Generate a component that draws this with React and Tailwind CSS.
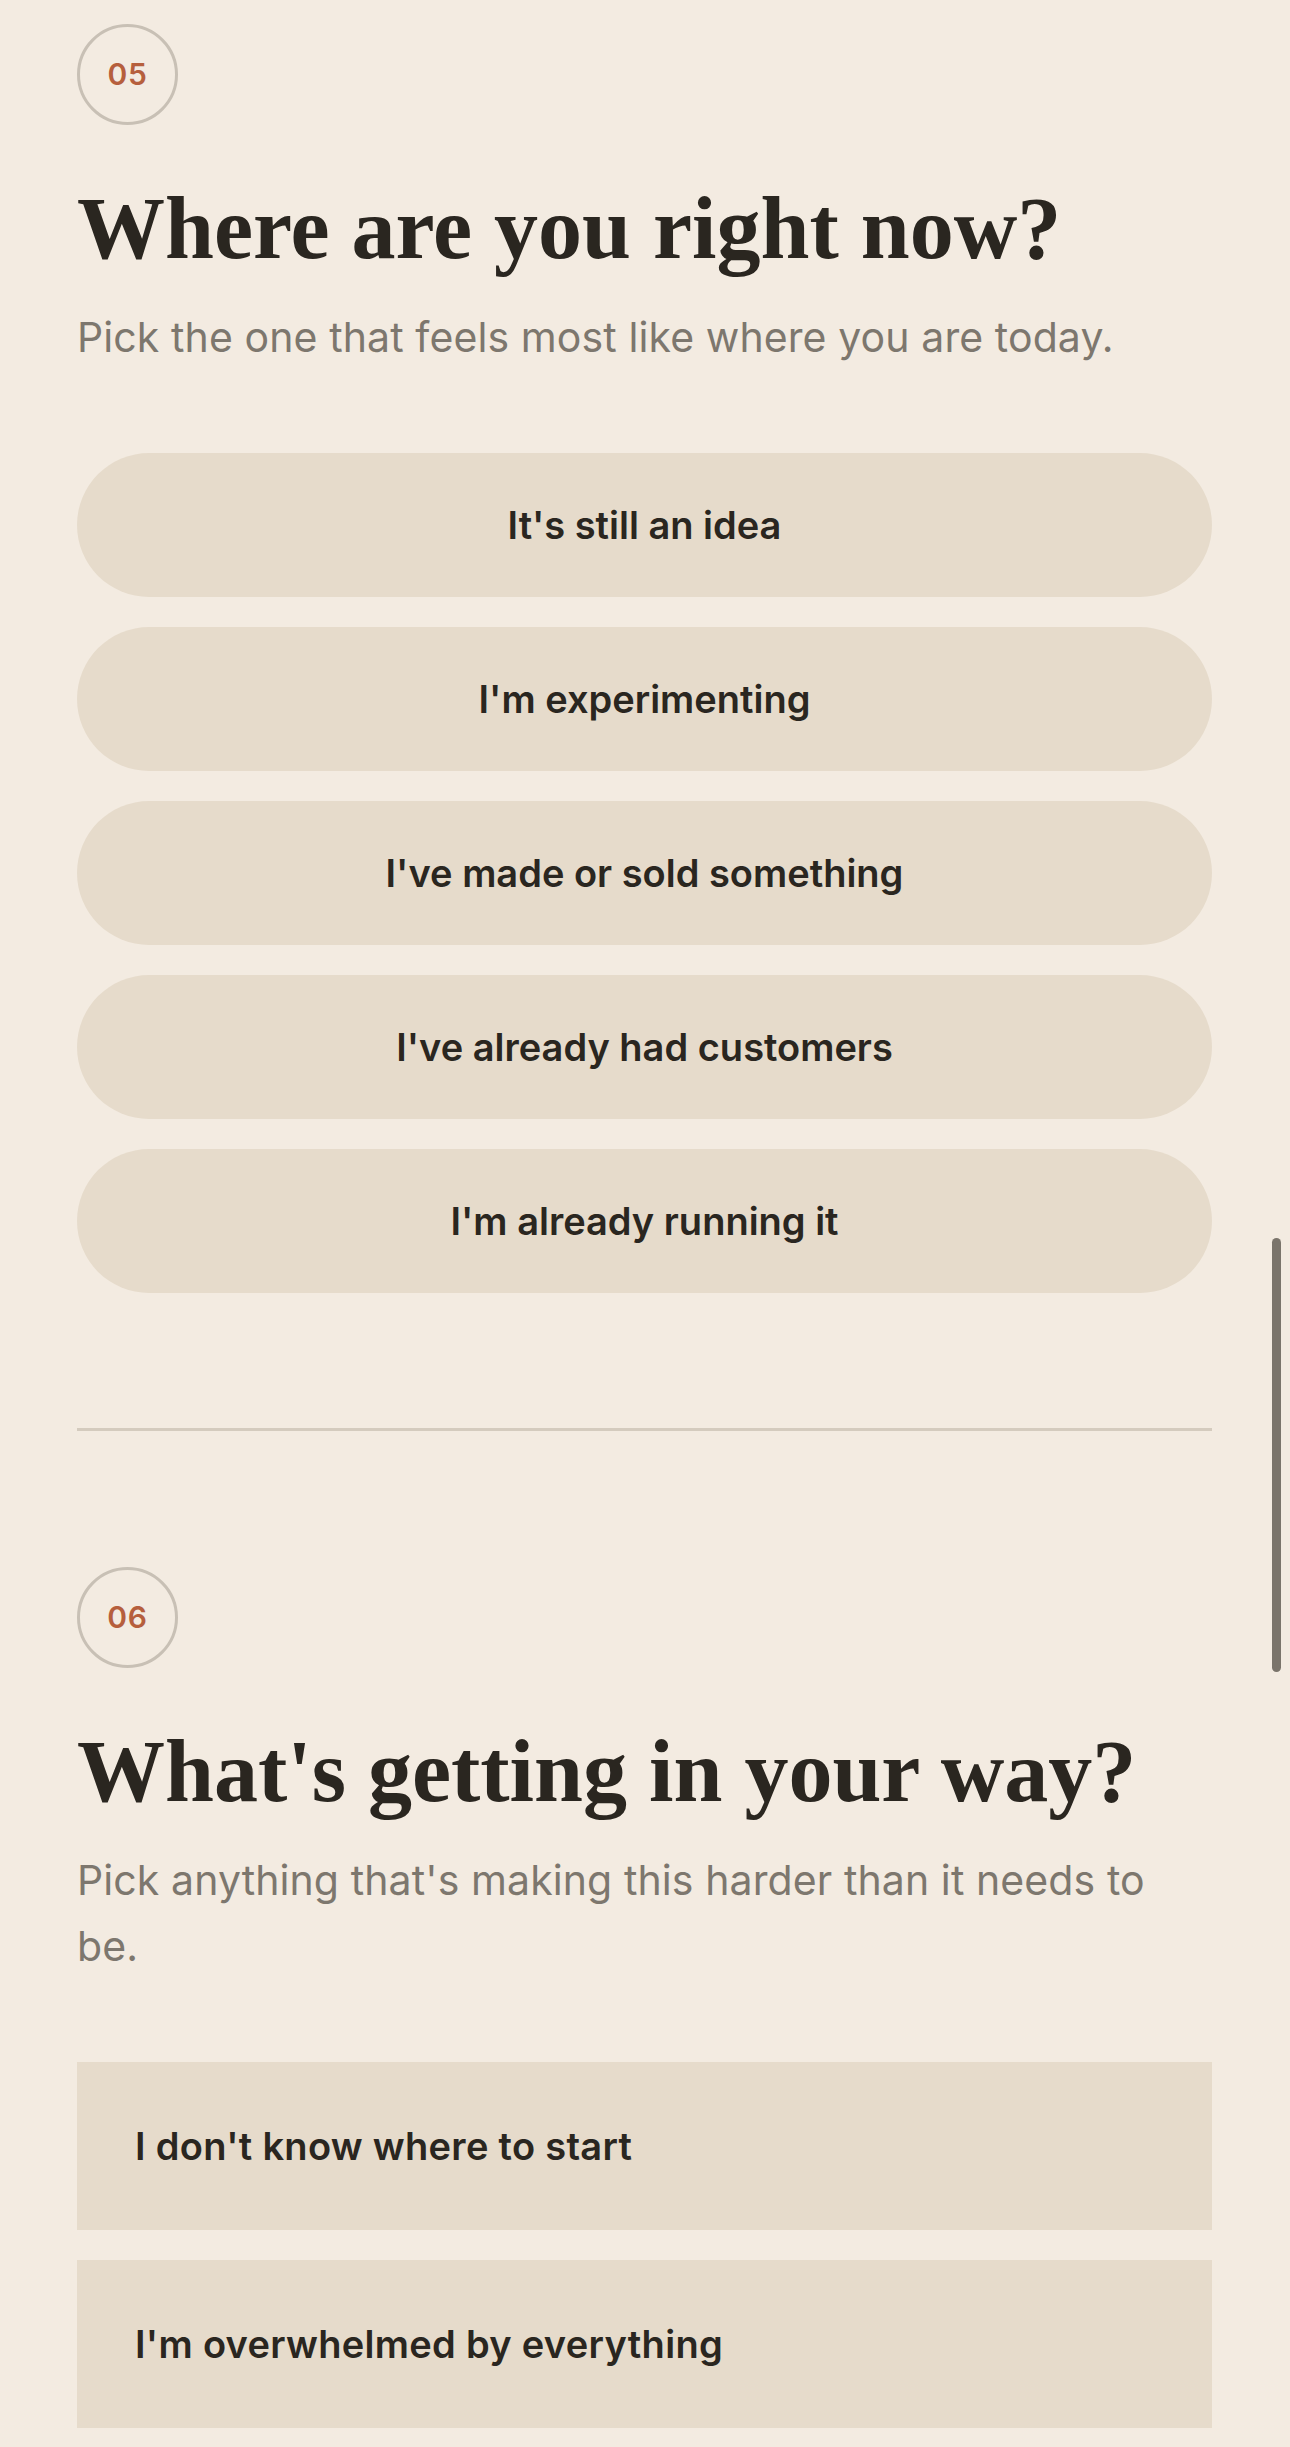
import React from 'react';

const stages = [
  "It's still an idea",
  "I'm experimenting",
  "I've made or sold something",
  "I've already had customers",
  "I'm already running it",
];

const blockers = [
  "I don't know where to start",
  "I'm overwhelmed by everything",
];

const serif = { fontFamily: '"Liberation Serif", "DejaVu Serif", serif' };

function StepBadge({ n }) {
  return (
    <div className="w-[101px] h-[101px] rounded-full border-[3px] border-[#c8c0b5] flex items-center justify-center text-[30px] font-semibold text-[#b65f3d] tracking-wide">
      {n}
    </div>
  );
}

function Question({ n, title, hint }) {
  return (
    <>
      <StepBadge n={n} />
      <h2 style={serif} className="mt-[60px] text-[88px] leading-none font-bold text-[#2a2620]">{title}</h2>
      <p className="mt-[31px] max-w-[1100px] text-[41px] leading-[66px] tracking-[0.1px] text-[#7d776e]">{hint}</p>
    </>
  );
}

export default function App() {
  return (
    <div className="relative min-h-screen bg-[#f3ebe1] overflow-hidden" style={{ fontFamily: 'Inter, "Noto Sans", sans-serif' }}>
      <div className="pl-[77px] pr-[78px] pt-[24px] pb-[20px]">
        <Question n="05" title="Where are you right now?" hint="Pick the one that feels most like where you are today." />

        <div className="mt-[83px] flex flex-col gap-[30px]">
          {stages.map(s => (
            <button key={s} className="h-[144px] w-full rounded-full bg-[#e6dbcb] flex items-center justify-center text-[38px] font-semibold text-[#2a2620]">
              {s}
            </button>
          ))}
        </div>

        <div className="mt-[135px] h-[3px] bg-[#d4cbbe]" />

        <div className="mt-[136px]">
          <Question n="06" title="What's getting in your way?" hint="Pick anything that's making this harder than it needs to be." />
        </div>

        <div className="mt-[83px] flex flex-col gap-[30px]">
          {blockers.map(b => (
            <button key={b} className="h-[168px] w-full bg-[#e6dbcb] flex items-center pl-[58px] text-[38px] font-semibold tracking-[0.3px] text-[#2a2620] text-left">
              {b}
            </button>
          ))}
        </div>
      </div>

      {/* overlay scrollbar */}
      <div className="absolute left-[1272px] top-[1238px] w-[9px] h-[434px] rounded-full bg-[#7a746b]" />
    </div>
  );
}
